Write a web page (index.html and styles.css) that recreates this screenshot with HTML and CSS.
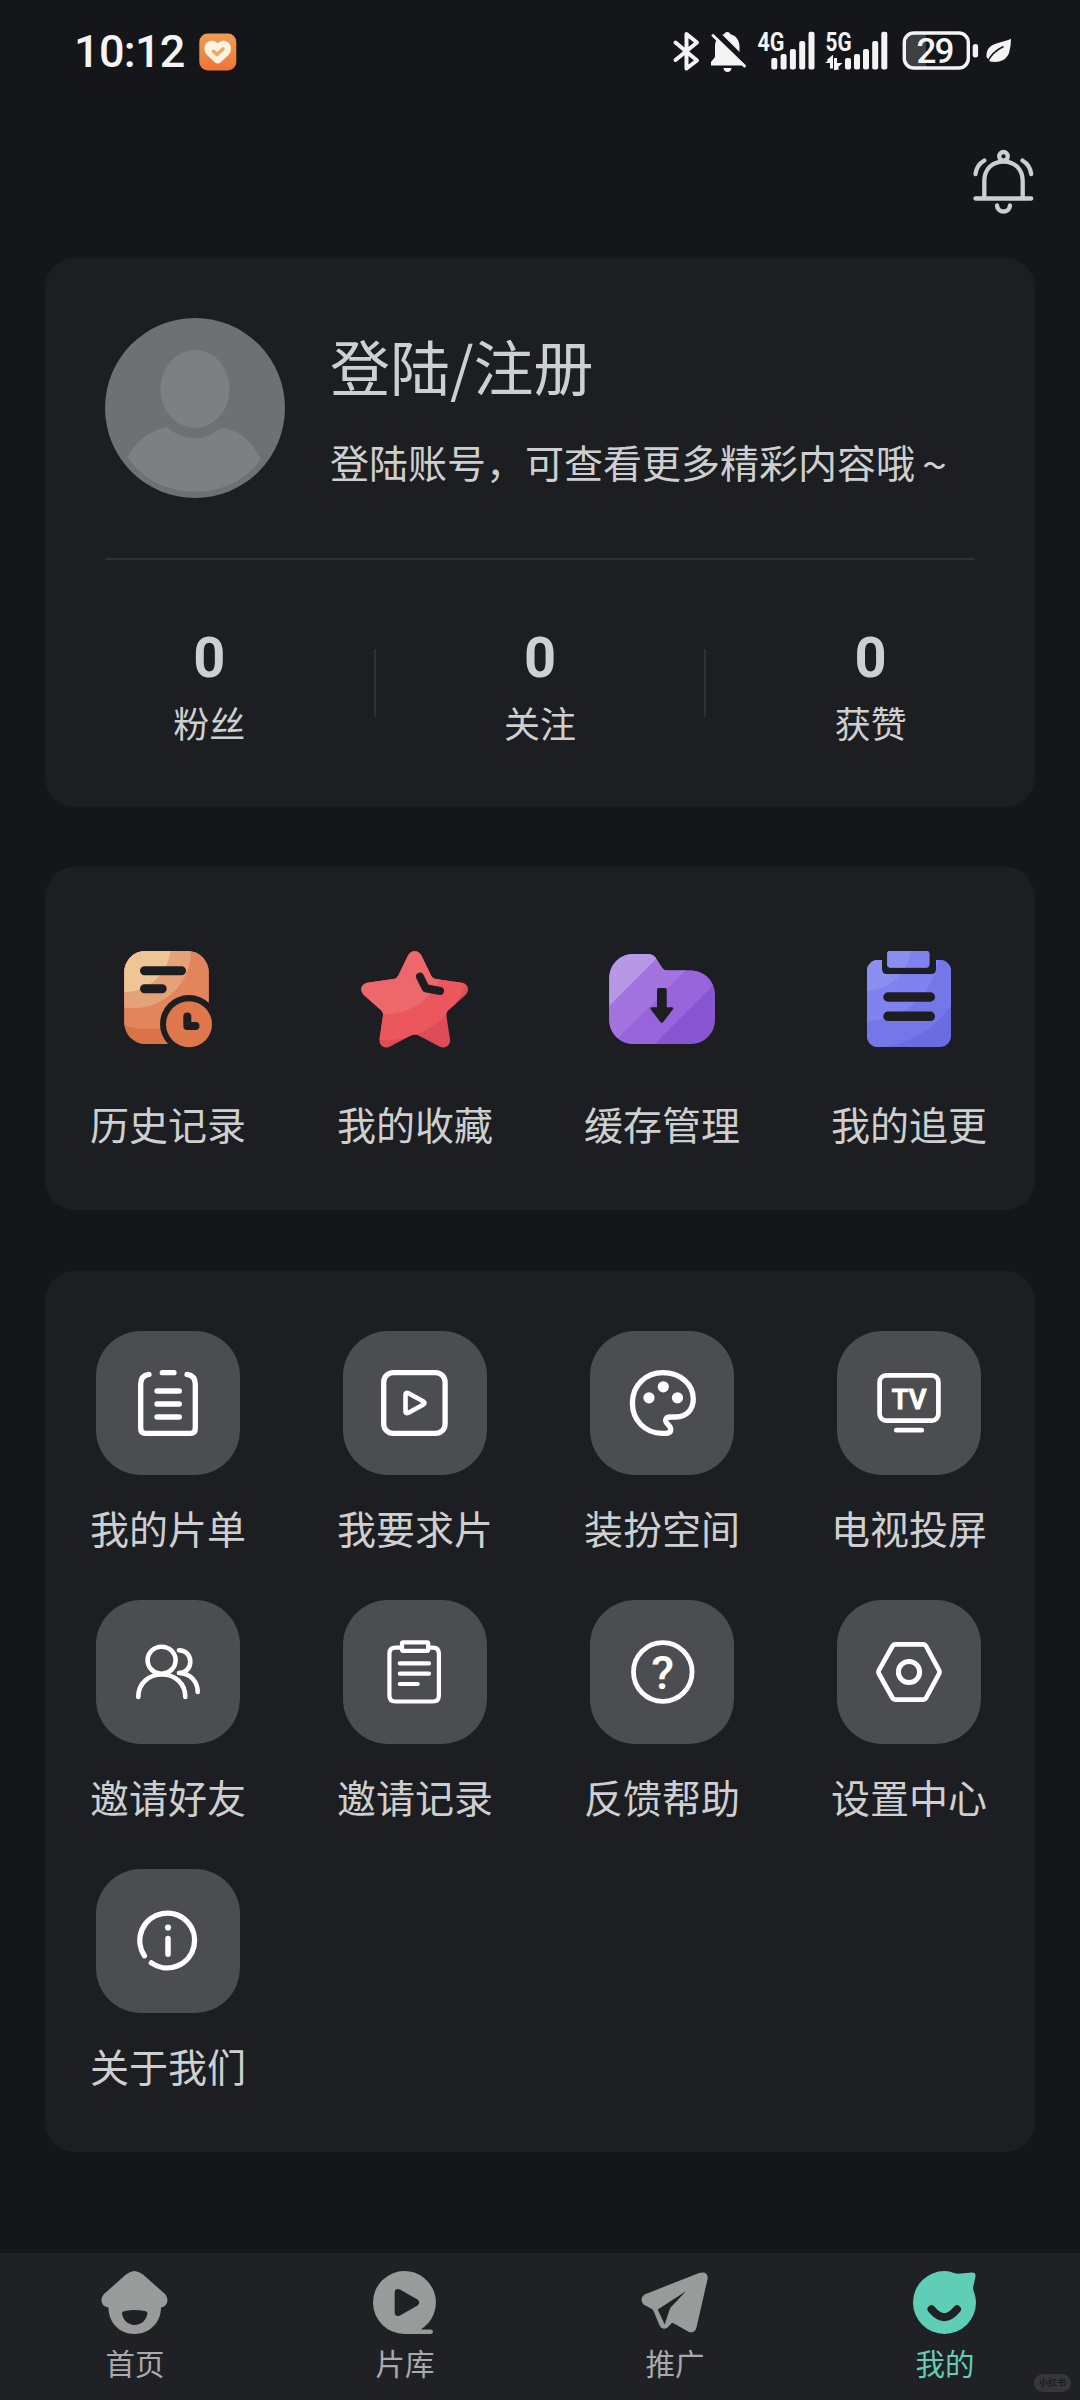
FILE: index.html
```html
<!DOCTYPE html>
<html lang="zh-CN">
<head>
<meta charset="utf-8">
<title>我的</title>
<link rel="stylesheet" href="styles.css">
</head>
<body>
<div class="page">
  <header class="status">
    <span class="time">10:12</span>
    <svg class="health" width="38" height="38" viewBox="0 0 38 38">
      <defs><linearGradient id="hg" x1="0" y1="0" x2="0" y2="1"><stop offset="0" stop-color="#eda056"/><stop offset="1" stop-color="#ee7436"/></linearGradient></defs>
      <rect x="0.3" y="0.5" width="37" height="37" rx="8.5" fill="url(#hg)"/>
      <path d="M18.7 10.3C21.5 7 26 7 29 9.2C33 12.500 33 18 29.500 22L22 29Q18.700 32 15.500 29L8 22C4.500 18 4.500 12.500 8.500 9.200C11.500 7 16 7 18.700 10.300Z" fill="#fdf1df"/>
      <path d="M14.500 18.500L18 21.500L24 16" fill="none" stroke="#e9a961" stroke-width="3.600" stroke-linecap="round" stroke-linejoin="round"/>
    </svg>
    <svg class="status-icons" width="350" height="64" viewBox="670 20 350 64" fill="#f4f4f5">
      <path d="M675.500 42.500L697 60.500L686.500 68.500V34L697 42.500L675.500 60" fill="none" stroke="#f4f4f5" stroke-width="4" stroke-linejoin="round" stroke-linecap="round"/>
      <path d="M711 65.500V62L715 57V47C715 39 719 35.500 724 34.200Q725 32 727.300 32Q729.500 32 730.500 34.200C736 35.500 739.500 40 739.500 47V57L743 62V65.500Z"/>
      <path d="M723.500 68H731.500Q731 72 727.500 72Q724 72 723.500 68Z"/>
      <path d="M714 31.500L746 63.500" stroke="#15161a" stroke-width="7"/>
      <path d="M713 35.500L744.500 66" stroke="#f4f4f5" stroke-width="3" stroke-linecap="round"/>
      <text class="net" x="757.500" y="50.800" textLength="27" lengthAdjust="spacingAndGlyphs">4G</text>
      <rect x="771.300" y="58" width="6" height="11.500" rx="2"/><rect x="780.600" y="54" width="6" height="15.500" rx="2"/><rect x="789.900" y="49" width="6" height="20.500" rx="2"/><rect x="799.200" y="41" width="6" height="28.500" rx="2"/><rect x="808.500" y="31.700" width="6" height="37.800" rx="2"/>
      <text class="net" x="825.500" y="50.800" textLength="26" lengthAdjust="spacingAndGlyphs">5G</text>
      <path d="M828 61L831.500 58V68.500M838.500 68L835.500 68.500V58" fill="none" stroke="#f4f4f5" stroke-width="3"/>
      <path d="M825 63L832 57.500V63ZM835.500 69.500V63H842.500Z"/>
      <rect x="845" y="58" width="6" height="11.500" rx="2"/><rect x="854" y="54" width="6" height="15.500" rx="2"/><rect x="863" y="49" width="6" height="20.500" rx="2"/><rect x="872.200" y="41" width="6" height="28.500" rx="2"/><rect x="881.300" y="31.700" width="6" height="37.800" rx="2"/>
      <path d="M926 34V67H914Q906 67 906 59V42Q906 34 914 34Z" fill="#3f4044"/>
      <rect x="904.300" y="33" width="64" height="35" rx="9.500" fill="none" stroke="#f4f4f5" stroke-width="3.400"/>
      <text class="level" x="916.500" y="63" textLength="38">29</text>
      <rect x="972.700" y="44" width="5.400" height="13.500" rx="2.500"/>
      <path d="M1011 38.700C1000 44 986 42 986.500 57L990 61.500C998 63 1006 61 1009 53Q1011 47 1011 38.700Z"/>
      <path d="M987.500 62Q992 52 1003.500 46.500" fill="none" stroke="#15161a" stroke-width="1.600"/>
    </svg>
  </header>
  <div class="toolbar">
    <svg width="66" height="70" viewBox="0 0 66 70" fill="none" stroke="#cdced0" stroke-width="4.300" stroke-linecap="round">
      <circle cx="33.500" cy="9.300" r="4.300"/>
      <path d="M14.300 51V34C14.300 22 22.500 14.600 33.500 14.600S52.700 22 52.700 34V51"/>
      <path d="M5.500 51.500H61.200"/>
      <path d="M5.500 27Q6.500 18 14.300 13.500M61.200 27Q60.200 18 52.500 13.500"/>
      <path d="M27 58.500C27.500 66.500 39.500 66.500 40 58.500"/>
    </svg>
  </div>

  <section class="card profile">
    <div class="user">
      <svg width="180" height="180" viewBox="0 0 180 180">
        <circle cx="90" cy="90" r="90" fill="#6f7072"/>
        <ellipse cx="90" cy="71" rx="34.600" ry="39" fill="#7e7f81"/>
        <path d="M62 109C46 112 30 124 22.500 139C37 161 61 173.700 90 173.700S143 161 155.500 141C148 125 136 113 119 110Q114 110.500 111 113.500Q101 120.500 90 120.200Q74 120 62 109Z" fill="#7e7f81"/>
      </svg>
      <div class="user-text">
        <div class="name">登陆/注册</div>
        <div class="hint">登陆账号，可查看更多精彩内容哦<span class="wave">～</span></div>
      </div>
    </div>
    <div class="rule"></div>
    <div class="stats">
      <div class="stat"><b>0</b><span>粉丝</span></div>
      <i class="sep"></i>
      <div class="stat"><b>0</b><span>关注</span></div>
      <i class="sep"></i>
      <div class="stat"><b>0</b><span>获赞</span></div>
    </div>
  </section>

  <section class="card quick">
    <div class="item">
      <svg width="108" height="108" viewBox="0 0 108 108">
        <defs><clipPath id="c1"><rect x="10.300" y="6" width="84.400" height="93" rx="21"/></clipPath></defs>
        <g clip-path="url(#c1)">
          <rect width="108" height="108" fill="#db734a"/>
          <circle cx="34" cy="4" r="80" fill="#e2855c"/>
          <circle cx="20" cy="6" r="57" fill="#e5a178"/>
          <circle cx="10" cy="0" r="47" fill="#efc596"/>
        </g>
        <circle cx="75" cy="79" r="29" fill="#1d1e21"/>
        <circle cx="75" cy="79.200" r="23" fill="#df774c"/>
        <path d="M30.500 25.700H67.500M30.500 43.700H48.200" stroke="#1d1e21" stroke-width="9" stroke-linecap="round"/>
        <path d="M73.300 71.500V81H81.500" fill="none" stroke="#1d1e21" stroke-width="8" stroke-linecap="round" stroke-linejoin="round"/>
      </svg>
      <span>历史记录</span>
    </div>
    <div class="item">
      <svg width="108" height="108" viewBox="0 0 108 108">
        <defs><clipPath id="c2"><path d="M46.800 11C49.500 4.500 58 4.500 60.600 11L70 30.500Q71.500 33.500 74.500 34L101 37.700C107.500 39 109 45.500 104.500 50L87 65.500Q85 67.500 85.300 70L89 94.500C89.500 101 84 104 78.500 101.500L57 90.300Q53.700 88.500 50.400 90.300L29 101.500C23.500 104 18 101 18.500 94.500L22 70.500Q22.400 67.500 20.400 65.500L3 50C-1.500 45.500 0 39 6.500 37.700L33 34Q36 33.500 37.400 30.500Z"/></clipPath></defs>
        <g clip-path="url(#c2)">
          <rect width="108" height="108" fill="#de4d57"/>
          <circle cx="25" cy="10" r="85" fill="#eb575d"/>
          <circle cx="25" cy="10" r="59" fill="#ed686b"/>
        </g>
        <path d="M59 31.700L64.700 43.300L79 46" fill="none" stroke="#1d1e21" stroke-width="8" stroke-linecap="round" stroke-linejoin="round"/>
      </svg>
      <span>我的收藏</span>
    </div>
    <div class="item">
      <svg width="108" height="108" viewBox="0 0 108 108">
        <defs><clipPath id="c3"><path d="M1.300 33A24 24 0 0 1 25.300 9H40Q46 9 49 15L53.500 22Q55.500 25.600 59 25.600H83A24 24 0 0 1 107 50V75A24 24 0 0 1 83 99H25.300A24 24 0 0 1 1.300 75Z"/></clipPath></defs>
        <g clip-path="url(#c3)">
          <rect width="108" height="108" fill="#8956d2"/>
          <path d="M0 0H108V37.500L37.500 108H0Z" fill="#9764db"/>
          <path d="M0 0H103L0 103Z" fill="#a374df"/>
          <path d="M0 0H62L0 62Z" fill="#b798e6"/>
        </g>
        <path d="M50.500 43H57.200Q58.700 43 58.700 44.500V62.300H64Q66 62.700 64.800 64.500L55.200 77Q53.800 78.800 52.400 77L42.800 64.500Q41.600 62.700 43.600 62.300H49V44.500Q49 43 50.500 43Z" fill="#1d1e21"/>
      </svg>
      <span>缓存管理</span>
    </div>
    <div class="item">
      <svg width="108" height="108" viewBox="0 0 108 108">
        <defs><clipPath id="c4"><path d="M23 15H27V24.500Q27 29.300 32 29.300H76Q81 29.300 81 24.500V15H85A11 11 0 0 1 96 26V91A11 11 0 0 1 85 102H23A11 11 0 0 1 12 91V26A11 11 0 0 1 23 15Z"/><rect x="32.300" y="6" width="42" height="16.500" rx="3"/></clipPath></defs>
        <g clip-path="url(#c4)">
          <rect width="108" height="108" fill="#6a6ce0"/>
          <circle cx="15" cy="5" r="98" fill="#7577e9"/>
          <circle cx="12" cy="4" r="72" fill="#8082f1"/>
          <circle cx="10" cy="0" r="46" fill="#8b8ef1"/>
        </g>
        <path d="M33 52H75.300M33 71.300H75.300" stroke="#1d1e21" stroke-width="9.500" stroke-linecap="round"/>
      </svg>
      <span>我的追更</span>
    </div>
  </section>

  <section class="card services">
    <div class="item"><svg class="tile" viewBox="0 0 144 144" stroke-width="5.300">
      <path d="M53 43.300Q44.700 44.500 44.700 53V97.500Q44.700 102.400 49.500 102.400H94.500Q99.300 102.400 99.300 97.500V53Q99.300 44.500 91 43.300"/>
      <path d="M66.300 41.700H78M61 60H83.300M61 73H83.300M61 86H83.300"/>
    </svg><span>我的片单</span></div>
    <div class="item"><svg class="tile" viewBox="0 0 144 144" stroke-width="5.300">
      <rect x="40.700" y="41.600" width="61.400" height="60.800" rx="9.500"/>
      <path d="M62.500 63.500V80.500Q62.700 83 65 82L80.500 73.500Q82.500 72 80.500 70.500L65 62Q62.700 61 62.500 63.500Z" stroke-width="4.600"/>
    </svg><span>我要求片</span></div>
    <div class="item"><svg class="tile" viewBox="0 0 144 144" stroke-width="5.300">
      <path d="M72 102.300C55 102.300 42.400 89 42.400 72C42.400 54 56 41.600 73 41.600C90 41.600 103.300 53 103.300 68C103.300 79 96 86 86 86H80.500C75 86 74.500 90 77.500 93C81.500 96.500 83 102.300 75 102.300Z"/>
      <g fill="#fff" stroke="none"><circle cx="59" cy="66.800" r="5.600"/><circle cx="73.300" cy="55.800" r="5.600"/><circle cx="87.500" cy="66.800" r="5.600"/></g>
    </svg><span>装扮空间</span></div>
    <div class="item"><svg class="tile" viewBox="0 0 144 144" stroke-width="4.700">
      <rect x="42.600" y="44.400" width="58.800" height="45.200" rx="6.500"/>
      <path d="M59.300 99.200H84.700"/>
      <text class="tv" x="54.800" y="78" textLength="34.500" lengthAdjust="spacingAndGlyphs">TV</text>
    </svg><span>电视投屏</span></div>
    <div class="item"><svg class="tile" viewBox="0 0 144 144" stroke-width="4.600">
      <ellipse cx="65.600" cy="60.200" rx="14" ry="13.500"/>
      <path d="M42.300 97C42.300 83 53 74.500 65.800 74.500S89.300 83 89.300 97"/>
      <path d="M83 50.200C90 50.200 94.300 55.500 94.300 61.700S90 73 83 73C95 73.500 101.700 82 101.700 92"/>
    </svg><span>邀请好友</span></div>
    <div class="item"><svg class="tile" viewBox="0 0 144 144" stroke-width="4.200">
      <path d="M58.500 47.600H52.400Q46.400 47.600 46.400 53.600V95.500Q46.400 101.500 52.400 101.500H89.900Q95.900 101.500 95.900 95.500V53.600Q95.900 47.600 89.900 47.600H85.500"/>
      <rect x="59" y="42.400" width="26.200" height="8.400" rx="1"/>
      <path d="M56.800 63.400H86M56.800 73.700H86M56.800 84H74.700"/>
    </svg><span>邀请记录</span></div>
    <div class="item"><svg class="tile" viewBox="0 0 144 144" stroke-width="4.800">
      <circle cx="72.800" cy="72" r="29.300"/>
      <text class="mark" x="72.800" y="89.300" text-anchor="middle">?</text>
    </svg><span>反馈帮助</span></div>
    <div class="item"><svg class="tile" viewBox="0 0 144 144" stroke-width="4.700">
      <path d="M58 44.400H86.500Q88 44.400 89 46L102.200 70.500Q103 72 102.200 73.500L89 98Q88 99.600 86.500 99.600H58Q56.500 99.600 55.500 98L41.800 73.500Q41 72 41.800 70.500L55.500 46Q56.500 44.400 58 44.400Z"/>
      <circle cx="72" cy="72" r="10.600" stroke-width="5"/>
    </svg><span>设置中心</span></div>
    <div class="item"><svg class="tile" viewBox="0 0 144 144" stroke-width="5.300">
      <path d="M48.400 86.700A27.400 27.400 0 1 1 55.400 93.900"/>
      <path d="M72 69.500V85.300" stroke-width="5.500"/>
      <circle cx="72" cy="58.500" r="3.100" fill="#fff" stroke="none"/>
    </svg><span>关于我们</span></div>
  </section>

  <nav class="tabs">
    <div class="tab"><svg width="72" height="72" viewBox="0 0 72 72">
      <path d="M27 7.500Q35.300 0.500 44 7.500L66 27Q69.500 31 68 36Q66 40 62 40.500C62 56 50 67 35.500 67S9.500 56 9.500 40.500Q4.500 40 2.800 35.500Q1.500 31 5 27Z" fill="#999a9a"/>
      <path d="M23 46Q23 44.500 26 44Q35.500 42 45.500 44Q48.500 44.500 48.400 46C48 53 42 58 35.700 58S23.400 53 23 46Z" fill="#202125"/>
    </svg><span>首页</span></div>
    <div class="tab"><svg width="72" height="72" viewBox="0 0 72 72">
      <path d="M35.500 4A31.500 31.500 0 0 1 51.800 62.400H62Q64 62.600 64 64.700T62 67H35.500A31.500 31.500 0 0 1 35.500 4Z" fill="#999a9a"/>
      <path d="M25.700 25.500Q26 20.500 31 22.500L48.500 32.500Q52 35.500 48.500 38.500L31 48.500Q26 50.500 25.700 45.500Z" fill="#202125"/>
    </svg><span>片库</span></div>
    <div class="tab"><svg width="72" height="72" viewBox="0 0 72 72">
      <path d="M60 6Q68.500 3.500 68.800 11L57.500 60.500Q55.500 67 49.500 64.800L35 56.500Q33 55.300 31.500 57.500L28.500 60.500Q23.500 64 20.500 58.500L15 45Q14.300 42 11 41L4.500 37.500Q0 31.500 5.500 27.500Z" fill="#999a9a"/>
      <path d="M18.700 42.500L47 24.300L32.500 39.500Q31 41 30.300 43.500L25.700 57.500Z" fill="#202125"/>
    </svg><span>推广</span></div>
    <div class="tab active"><svg width="72" height="72" viewBox="0 0 72 72">
      <path d="M35.500 4Q40.500 4 45 6Q48 7 52 6.500L63 5.500Q67 5.500 66.500 9.500L64.300 19.500Q63.800 22 64.800 24.500Q67 30 67 35.500A31.500 31.500 0 1 1 35.500 4Z" fill="#60cdb6"/>
      <path d="M22.500 42.300Q35.300 58 48 42.300" fill="none" stroke="#202125" stroke-width="8" stroke-linecap="round"/>
    </svg><span>我的</span></div>
    <div class="badge">小红书</div>
  </nav>
</div>
</body>
</html>
```
FILE: styles.css
```css
* { box-sizing: border-box; }
body {
  margin: 0;
  background: #15161a;
  color: #cecfd1;
  font-family: "Noto Sans CJK SC", sans-serif;
}
.page {
  width: 1080px;
  height: 2400px;
  display: flex;
  flex-direction: column;
  overflow: hidden;
}
svg { display: block; flex: none; }

.status {
  height: 104px;
  padding: 0 60px 0 74px;
  display: flex;
  align-items: center;
}
.time {
  width: 125px;
  font: 500 45px/50px Roboto, sans-serif;
  letter-spacing: -0.7px;
  color: #f4f4f5;
}
.status-icons { margin-left: auto; }
.net { font: 700 26px Roboto, sans-serif; }
.level { font: 500 35px Roboto, sans-serif; }

.toolbar {
  height: 154px;
  padding: 43px 44px 0 0;
  display: flex;
  justify-content: flex-end;
}

.card {
  width: 990px;
  margin: 0 45px 60px;
  border-radius: 30px;
  background: #1d1e21;
  flex: none;
}

.profile { height: 549px; padding-top: 60px; }
.user { display: flex; gap: 45px; padding-left: 60px; }
.user-text { padding-top: 17px; white-space: nowrap; }
.name { font-size: 60px; line-height: 60px; }
.hint { margin-top: 46px; font-size: 39px; line-height: 40px; }
.wave {
  display: inline-block;
  width: 39px;
  text-align: center;
  font-size: 23px;
  font-weight: 700;
  line-height: 1;
  vertical-align: 4px;
}
.rule { height: 2px; margin: 60px 60px 0; background: #303134; }
.stats { display: flex; }
.stat {
  flex: 1;
  padding-top: 77px;
  display: flex;
  flex-direction: column;
  align-items: center;
}
.stat b { font: 700 56px/42px Roboto, sans-serif; }
.stat span { margin-top: 25px; font-size: 36px; line-height: 36px; }
.sep { width: 2px; height: 68px; margin-top: 89px; background: #303134; }

.quick, .services {
  display: grid;
  grid-template-columns: repeat(4, 156px);
  column-gap: 91px;
  padding-left: 45px;
  align-content: start;
}
.quick { height: 343px; padding-top: 78px; margin-bottom: 61px; }
.services { height: 881px; padding-top: 60px; row-gap: 53px; margin-bottom: 0; }
.item {
  display: flex;
  flex-direction: column;
  align-items: center;
  font-size: 39px;
  line-height: 40px;
  white-space: nowrap;
}
.quick span { margin-top: 50px; }
.services span { margin-top: 32px; }
.tile {
  width: 144px;
  height: 144px;
  border-radius: 45px;
  background: #4c4d50;
  fill: none;
  stroke: #fff;
  stroke-linecap: round;
  stroke-linejoin: round;
}
.tv { font: 500 27px Roboto, sans-serif; fill: #fff; stroke-width: 1.2; }
.mark { font: 500 47px Roboto, sans-serif; fill: #fff; stroke: none; }

.tabs {
  position: relative;
  margin-top: auto;
  height: 147px;
  padding-top: 14px;
  display: grid;
  grid-template-columns: repeat(4, 1fr);
  background: #202125;
}
.tab {
  display: flex;
  flex-direction: column;
  align-items: center;
  gap: 8px;
  font-size: 29.5px;
  line-height: 30px;
  color: #a9aaab;
}
.active { color: #60cdb6; }
.badge {
  position: absolute;
  right: 9px;
  bottom: 8px;
  width: 37px;
  height: 18px;
  border-radius: 9px;
  background: #36373a;
  color: #1c1d20;
  font-size: 9px;
  font-weight: 700;
  line-height: 18px;
  text-align: center;
}
```
